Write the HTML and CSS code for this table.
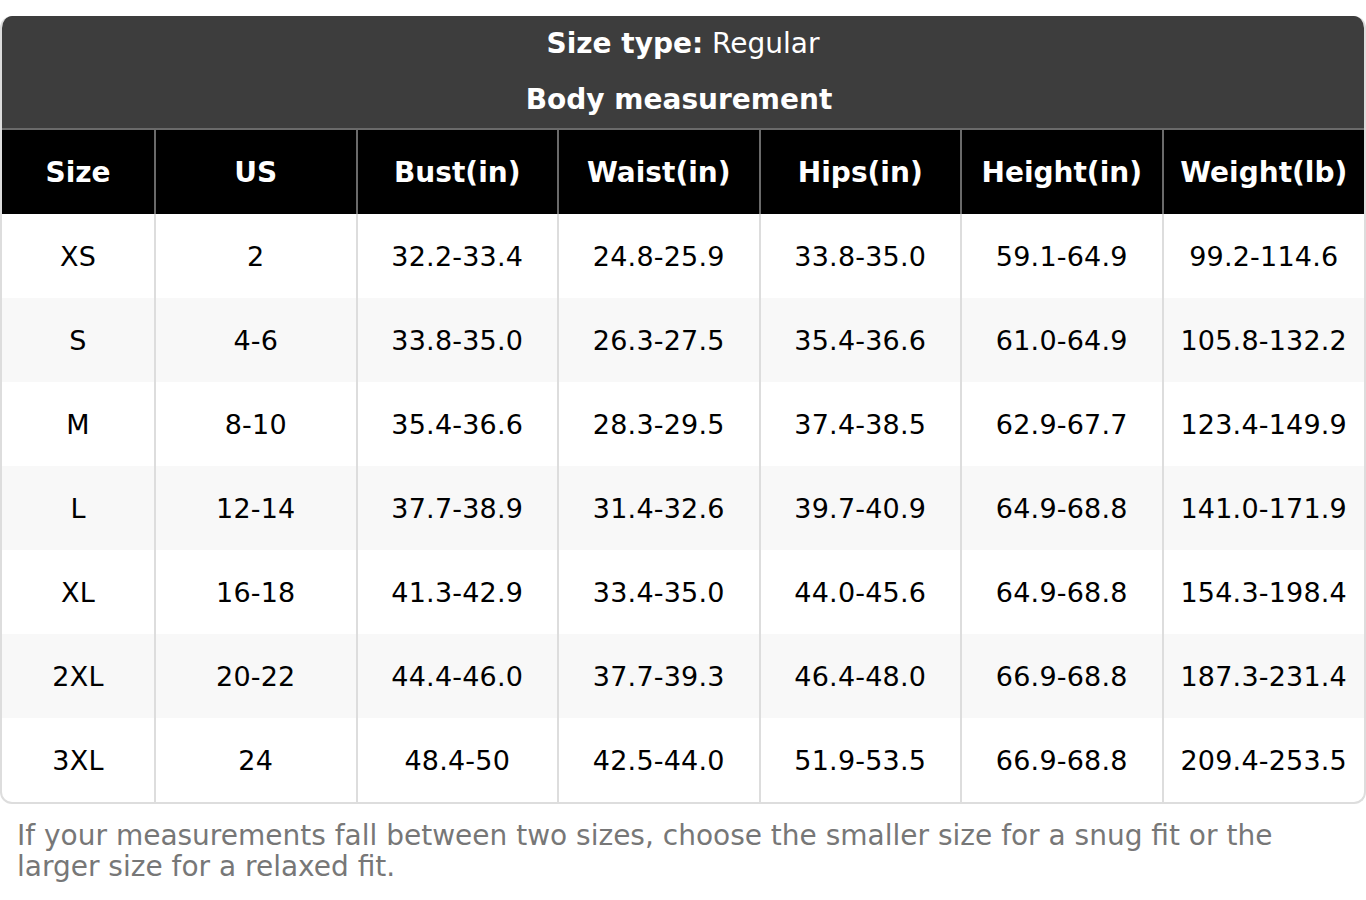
FILE: index.html
```html
<!DOCTYPE html>
<html lang="en">
<head>
<meta charset="utf-8">
<title>Size chart</title>
<link rel="stylesheet" href="styles.css">
</head>
<body>
<div class="chart">
  <div class="chart-head">
    <div class="head-line"><strong>Size type:</strong> Regular</div>
    <div class="head-line head-line--shift"><strong>Body measurement</strong></div>
  </div>
  <table class="size-table">
    <colgroup>
      <col class="c-size"><col><col><col><col><col><col>
    </colgroup>
    <thead>
      <tr><th>Size</th><th>US</th><th>Bust(in)</th><th>Waist(in)</th><th>Hips(in)</th><th>Height(in)</th><th>Weight(lb)</th></tr>
    </thead>
    <tbody>
      <tr><td>XS</td><td>2</td><td>32.2-33.4</td><td>24.8-25.9</td><td>33.8-35.0</td><td>59.1-64.9</td><td>99.2-114.6</td></tr>
      <tr><td>S</td><td>4-6</td><td>33.8-35.0</td><td>26.3-27.5</td><td>35.4-36.6</td><td>61.0-64.9</td><td>105.8-132.2</td></tr>
      <tr><td>M</td><td>8-10</td><td>35.4-36.6</td><td>28.3-29.5</td><td>37.4-38.5</td><td>62.9-67.7</td><td>123.4-149.9</td></tr>
      <tr><td>L</td><td>12-14</td><td>37.7-38.9</td><td>31.4-32.6</td><td>39.7-40.9</td><td>64.9-68.8</td><td>141.0-171.9</td></tr>
      <tr><td>XL</td><td>16-18</td><td>41.3-42.9</td><td>33.4-35.0</td><td>44.0-45.6</td><td>64.9-68.8</td><td>154.3-198.4</td></tr>
      <tr><td>2XL</td><td>20-22</td><td>44.4-46.0</td><td>37.7-39.3</td><td>46.4-48.0</td><td>66.9-68.8</td><td>187.3-231.4</td></tr>
      <tr><td>3XL</td><td>24</td><td>48.4-50</td><td>42.5-44.0</td><td>51.9-53.5</td><td>66.9-68.8</td><td>209.4-253.5</td></tr>
    </tbody>
  </table>
</div>
<p class="note">If your measurements fall between two sizes, choose the smaller size for a snug fit or the larger size for a relaxed fit.</p>
</body>
</html>
```
FILE: styles.css
```css
html, body {
  margin: 0;
  padding: 0;
  background: #fff;
}
body {
  font-family: "DejaVu Sans", sans-serif;
  padding-top: 16px;
}
.chart {
  border: 2px solid #dddddd;
  border-top: 0;
  border-radius: 12px;
  overflow: hidden;
  background: #fff;
}
.chart-head {
  background: #3d3d3d;
  color: #fff;
  text-align: center;
  border-bottom: 2px solid #6a6a6a;
  margin: 0 -2px;
}
.head-line {
  height: 56px;
  line-height: 56px;
  font-size: 28px;
}
.head-line--shift {
  padding-right: 8px;
}
.head-line strong {
  font-weight: bold;
}
.size-table {
  width: 100%;
  border-collapse: collapse;
  table-layout: fixed;
}
.c-size {
  width: 153px;
}
.size-table th {
  background: #000;
  color: #fff;
  font-size: 28px;
  font-weight: bold;
  height: 84px;
  padding: 0;
  text-align: center;
  border-left: 2px solid #6a6a6a;
}
.size-table th:first-child,
.size-table td:first-child {
  border-left: 0;
}
.size-table td {
  height: 84px;
  padding: 0;
  text-align: center;
  font-size: 27px;
  letter-spacing: 0.2px;
  color: #000;
  border-left: 2px solid #dddddd;
}
.size-table tbody tr:nth-child(even) td {
  background: #f8f8f8;
}
.note {
  margin: 16px 17px 0;
  font-size: 28px;
  line-height: 31px;
  color: #777777;
}
```
